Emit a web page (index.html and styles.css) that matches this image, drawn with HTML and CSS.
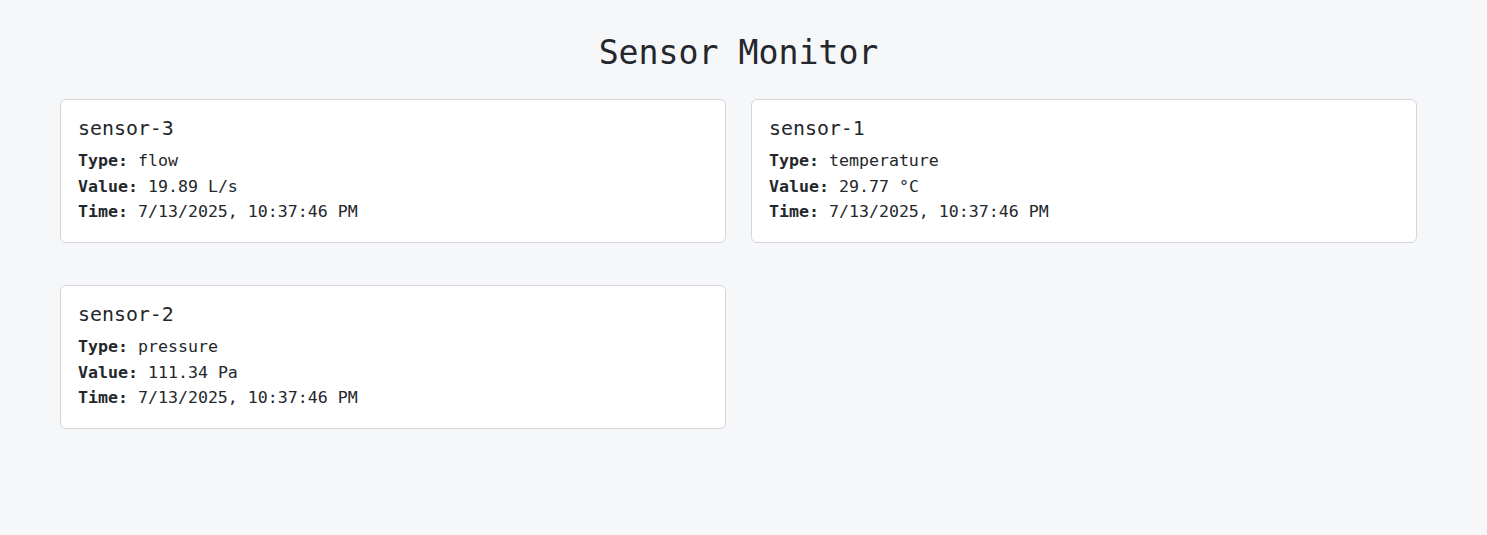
FILE: index.html
```html
<!DOCTYPE html>
<html lang="en">
<head>
<meta charset="utf-8">
<title>Sensor Monitor</title>
<link rel="stylesheet" href="styles.css">
</head>
<body>
<div class="page">
  <h1 class="title">Sensor Monitor</h1>
  <div class="grid">
    <div class="card">
      <h2 class="name">sensor-3</h2>
      <div class="row"><span class="label">Type:</span> flow</div>
      <div class="row"><span class="label">Value:</span> 19.89 L/s</div>
      <div class="row"><span class="label">Time:</span> 7/13/2025, 10:37:46 PM</div>
    </div>
    <div class="card">
      <h2 class="name">sensor-1</h2>
      <div class="row"><span class="label">Type:</span> temperature</div>
      <div class="row"><span class="label">Value:</span> 29.77 °C</div>
      <div class="row"><span class="label">Time:</span> 7/13/2025, 10:37:46 PM</div>
    </div>
    <div class="card">
      <h2 class="name">sensor-2</h2>
      <div class="row"><span class="label">Type:</span> pressure</div>
      <div class="row"><span class="label">Value:</span> 111.34 Pa</div>
      <div class="row"><span class="label">Time:</span> 7/13/2025, 10:37:46 PM</div>
    </div>
  </div>
</div>
</body>
</html>
```
FILE: styles.css
```css
html, body {
  margin: 0;
  padding: 0;
  background: #f6f7f9;
}
body {
  font-family: "DejaVu Sans Mono", "Liberation Mono", monospace;
  color: #24272c;
  height: 535px;
}
.page {
  padding: 31px 70px 0 60px;
}
.title {
  margin: 0;
  font-size: 33.2px;
  font-weight: normal;
  line-height: 44px;
  text-align: center;
  color: #24272c;
}
.grid {
  margin-top: 24px;
  display: grid;
  grid-template-columns: 1fr 1fr;
  column-gap: 25px;
  row-gap: 42px;
}
.card {
  background: #ffffff;
  border: 1px solid #d3d6db;
  border-radius: 6px;
  padding: 17px 17px 12px 17px;
  height: 144px;
  box-sizing: border-box;
}
.name {
  margin: 0 0 7px 0;
  font-size: 19.9px;
  font-weight: normal;
  line-height: 24px;
}
.row {
  font-size: 16.6px;
  line-height: 25.5px;
  white-space: nowrap;
}
.label {
  font-weight: bold;
}
```
